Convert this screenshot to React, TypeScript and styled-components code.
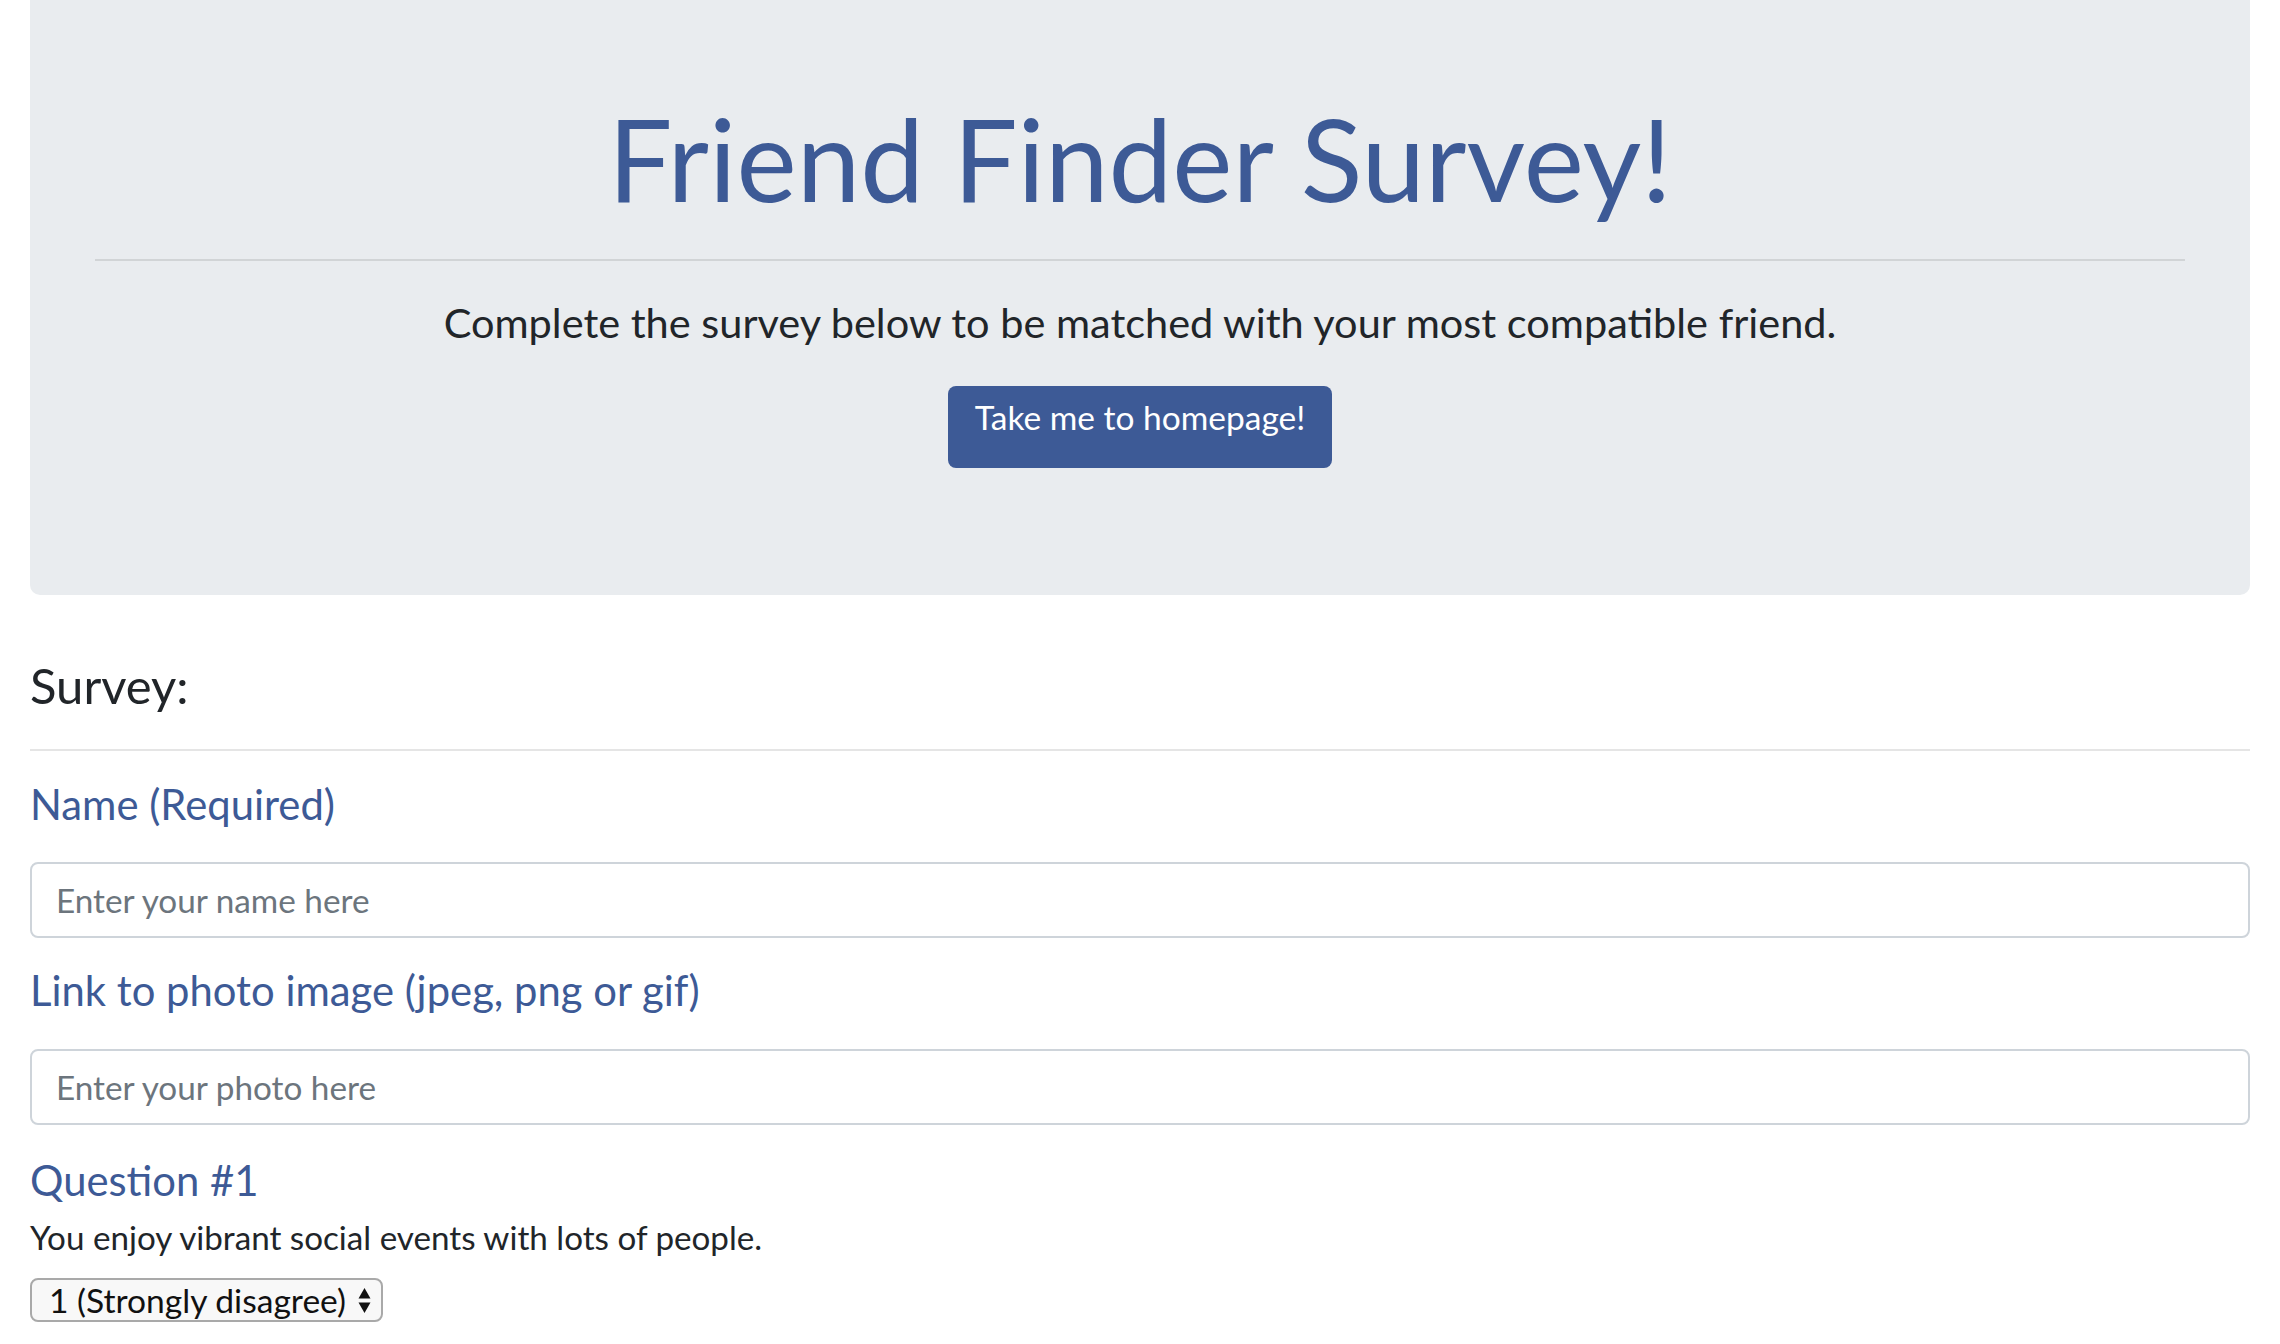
import React from "react";
import styled, { createGlobalStyle } from "styled-components";

const GlobalStyle = createGlobalStyle`
  html, body { margin: 0; padding: 0; background: #ffffff; }
  body { font-family: "Lato", "Noto Sans", sans-serif; color: #212529; }
  * { box-sizing: border-box; }
`;

const Page = styled.div`
  padding: 0 30px;
  display: flex;
  flex-direction: column;
`;

const Jumbotron = styled.header`
  background: #e9ecef;
  border-radius: 0 0 10px 10px;
  padding: 90px 65px 127px;
  display: flex;
  flex-direction: column;
  align-items: center;
`;

const Title = styled.h1`
  margin: 0;
  font-size: 114px;
  line-height: 1.2;
  font-weight: 400;
  color: #3d5a96;
  text-align: center;
`;

const Rule = styled.hr<{ $top: number; $tone: string }>`
  align-self: stretch;
  border: 0;
  height: 2px;
  margin: ${(p) => p.$top}px 0 0;
  background: ${(p) => p.$tone};
`;

const Lead = styled.p`
  margin: 31px 0 0;
  font-size: 41.5px;
  line-height: 60px;
  text-align: center;
  color: #212529;
`;

const HomeButton = styled.a`
  margin-top: 34px;
  height: 82px;
  padding: 0 27px 20px;
  display: inline-flex;
  align-items: center;
  background: #3d5a96;
  color: #ffffff;
  border-radius: 8px;
  font-size: 33.5px;
  text-decoration: none;
`;

const Survey = styled.form`
  display: flex;
  flex-direction: column;
`;

const SurveyHeading = styled.h3`
  margin: 61px 0 0;
  font-size: 49px;
  line-height: 1.2;
  font-weight: 400;
  color: #212529;
`;

const FieldLabel = styled.h4<{ $top: number }>`
  margin: ${(p) => p.$top}px 0 0;
  font-size: 41.8px;
  line-height: 49px;
  font-weight: 400;
  color: #3d5a96;
`;

const TextInput = styled.input<{ $top: number }>`
  margin-top: ${(p) => p.$top}px;
  height: 76px;
  width: 100%;
  padding: 0 24px;
  border: 2px solid #ced4da;
  border-radius: 8px;
  font-family: inherit;
  font-size: 33.3px;
  color: #495057;
  background: #ffffff;
  &::placeholder { color: #6c757d; }
`;

const Prompt = styled.p`
  margin: 8.5px 0 0;
  font-size: 33.2px;
  line-height: 48px;
  color: #212529;
`;

const SelectBox = styled.label`
  margin-top: 17px;
  align-self: flex-start;
  height: 44px;
  display: inline-flex;
  align-items: center;
  gap: 11px;
  padding: 0 10px 0 0;
  border: 2px solid #a9a9a9;
  border-radius: 8px;
  background: #f8f8f8;
`;

const NativeSelect = styled.select`
  appearance: none;
  -webkit-appearance: none;
  border: 0;
  background: transparent;
  font-family: inherit;
  font-size: 33.6px;
  color: #111111;
  padding: 0 0 0 17px;
  height: 100%;
  outline: none;
`;

const Arrows = () => (
  <svg width="13" height="27" viewBox="0 0 13 27" aria-hidden="true">
    <path d="M6.5 1 L12.5 11.5 H0.5 Z" fill="#111" />
    <path d="M6.5 26 L12.5 15.5 H0.5 Z" fill="#111" />
  </svg>
);

export default function App() {
  return (
    <>
      <GlobalStyle />
      <Page>
        <Jumbotron>
          <Title>Friend Finder Survey!</Title>
          <Rule $top={32} $tone="rgba(0,0,0,0.1)" />
          <Lead>Complete the survey below to be matched with your most compatible friend.</Lead>
          <HomeButton href="#">Take me to homepage!</HomeButton>
        </Jumbotron>
        <Survey>
          <SurveyHeading>Survey:</SurveyHeading>
          <Rule $top={34} $tone="rgba(0,0,0,0.1)" />
          <FieldLabel $top={29}>Name (Required)</FieldLabel>
          <TextInput $top={33} placeholder="Enter your name here" />
          <FieldLabel $top={28.5}>Link to photo image (jpeg, png or gif)</FieldLabel>
          <TextInput $top={34} placeholder="Enter your photo here" />
          <FieldLabel $top={30.5}>Question #1</FieldLabel>
          <Prompt>You enjoy vibrant social events with lots of people.</Prompt>
          <SelectBox>
            <NativeSelect defaultValue="1">
              <option value="1">1 (Strongly disagree)</option>
              <option value="2">2</option>
              <option value="3">3</option>
              <option value="4">4</option>
              <option value="5">5 (Strongly agree)</option>
            </NativeSelect>
            <Arrows />
          </SelectBox>
        </Survey>
      </Page>
    </>
  );
}
